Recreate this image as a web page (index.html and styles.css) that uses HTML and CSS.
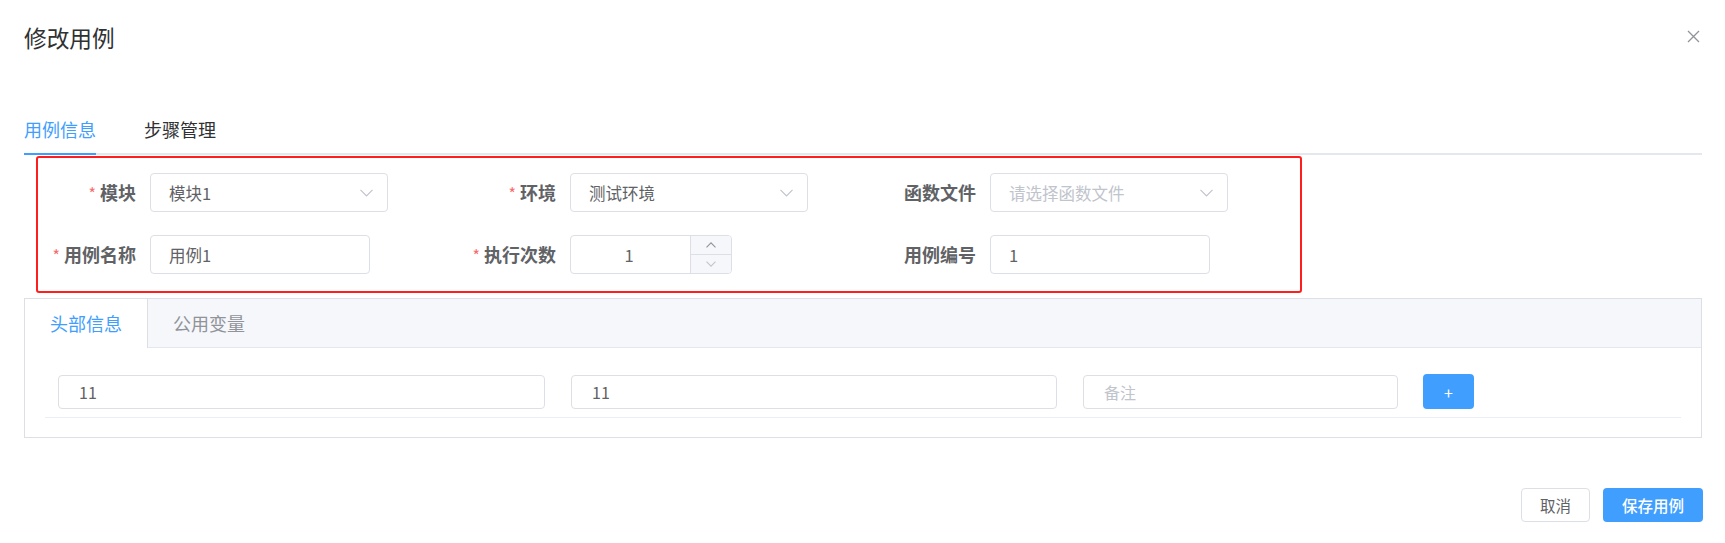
FILE: index.html
```html
<!DOCTYPE html>
<html lang="zh-CN">
<head>
<meta charset="utf-8">
<title>修改用例</title>
<link rel="stylesheet" href="styles.css">
</head>
<body>
<div class="dialog">
  <div class="dlg-header">
    <span class="dlg-title">修改用例</span>
    <svg class="dlg-close" width="13" height="13" viewBox="0 0 13 13"><path d="M1 1L12 12M12 1L1 12" stroke="#909399" stroke-width="1.3" fill="none"/></svg>
  </div>
  <div class="dlg-body">
    <div class="tabs-nav">
      <div class="tab active">用例信息</div>
      <div class="tab">步骤管理</div>
    </div>

    <div class="case-form">
      <div class="form-item">
        <label class="form-label"><span class="req">*</span>模块</label>
        <div class="input w-select"><span>模块1</span><svg class="chev" width="13" height="8" viewBox="0 0 13 8"><path d="M0.5 0.8L6.5 6.8L12.5 0.8" stroke="#c0c4cc" stroke-width="1.2" fill="none"/></svg></div>
      </div>
      <div class="form-item">
        <label class="form-label"><span class="req">*</span>环境</label>
        <div class="input w-select"><span>测试环境</span><svg class="chev" width="13" height="8" viewBox="0 0 13 8"><path d="M0.5 0.8L6.5 6.8L12.5 0.8" stroke="#c0c4cc" stroke-width="1.2" fill="none"/></svg></div>
      </div>
      <div class="form-item">
        <label class="form-label">函数文件</label>
        <div class="input w-select"><span class="placeholder">请选择函数文件</span><svg class="chev" width="13" height="8" viewBox="0 0 13 8"><path d="M0.5 0.8L6.5 6.8L12.5 0.8" stroke="#c0c4cc" stroke-width="1.2" fill="none"/></svg></div>
      </div>

      <div class="form-item">
        <label class="form-label"><span class="req">*</span>用例名称</label>
        <div class="input w-text">用例1</div>
      </div>
      <div class="form-item">
        <label class="form-label"><span class="req">*</span>执行次数</label>
        <div class="num">
          <div class="num-val">1</div>
          <div class="num-ctrl">
            <span><svg width="10" height="6" viewBox="0 0 10 6"><path d="M0.5 5.3L5 0.8L9.5 5.3" stroke="#909399" stroke-width="1.1" fill="none"/></svg></span>
            <span><svg width="10" height="6" viewBox="0 0 10 6"><path d="M0.5 0.7L5 5.2L9.5 0.7" stroke="#c0c4cc" stroke-width="1.1" fill="none"/></svg></span>
          </div>
        </div>
      </div>
      <div class="form-item">
        <label class="form-label">用例编号</label>
        <div class="input w-text">1</div>
      </div>
    </div>

    <div class="card">
      <div class="card-head">
        <div class="card-tab active">头部信息</div>
        <div class="card-tab">公用变量</div>
      </div>
      <div class="card-body">
        <div class="kv-row">
          <div class="kv-input k1">11</div>
          <div class="kv-input k2">11</div>
          <div class="kv-input k3"><span class="placeholder">备注</span></div>
          <div class="add-btn">+</div>
        </div>
      </div>
    </div>
  </div>
  <div class="dlg-footer">
    <div class="btn btn-default">取消</div>
    <div class="btn btn-primary">保存用例</div>
  </div>
</div>
</body>
</html>
```
FILE: styles.css
```css
* { box-sizing: border-box; }

body {
  margin: 0;
  background: #fff;
  font-family: "Noto Sans CJK SC", "Noto Sans", sans-serif;
  color: #606266;
}

.dialog {
  width: 1725px;
  height: 543px;
}

.dlg-header {
  display: flex;
  justify-content: space-between;
  align-items: flex-start;
  height: 50px;
  padding: 26px 25px 0 24px;
}

.dlg-title {
  font-size: 22.7px;
  line-height: 24px;
  color: #303133;
}

.dlg-close {
  display: block;
  margin-top: 4px;
}

.dlg-body {
  padding: 0 23px 0 24px;
}

.tabs-nav {
  display: flex;
  gap: 48px;
  margin-top: 61px;
  border-bottom: 2px solid #e4e7ed;
}

.tab {
  font-size: 18px;
  line-height: 36px;
  padding-bottom: 6px;
  color: #303133;
  margin-bottom: -2px;
  border-bottom: 2px solid transparent;
}

.tab.active {
  color: #409eff;
  border-bottom-color: #409eff;
}

.case-form {
  margin: 1px 0 0 12px;
  width: 1266px;
  border: 2px solid #ff1e1e;
  border-radius: 3px;
  padding: 15px 0 17px 2px;
  display: grid;
  grid-template-columns: repeat(3, 420px);
  row-gap: 23px;
}

.form-item {
  display: flex;
  align-items: center;
  height: 39px;
}

.form-label {
  width: 110px;
  flex: none;
  text-align: right;
  padding-right: 14px;
  font-size: 18px;
  font-weight: 700;
  line-height: 39px;
  color: #606266;
  white-space: nowrap;
}

.req {
  color: #f56c6c;
  font-weight: 400;
  font-size: 16px;
  margin-right: 4px;
}

.input {
  height: 39px;
  border: 1px solid #dcdfe6;
  border-radius: 4px;
  display: flex;
  align-items: center;
  padding: 0 0 0 18px;
  font-size: 16.5px;
  color: #606266;
  background: #fff;
  white-space: nowrap;
}

.w-select {
  width: 238px;
  padding-right: 14px;
  justify-content: space-between;
}

.w-text {
  width: 220px;
}

.placeholder {
  color: #c0c4cc;
}

.chev {
  display: block;
}

.num {
  width: 162px;
  height: 39px;
  border: 1px solid #dcdfe6;
  border-radius: 4px;
  display: flex;
  overflow: hidden;
}

.num-val {
  flex: 1;
  display: flex;
  align-items: center;
  justify-content: center;
  padding-right: 3px;
  font-size: 16.5px;
  color: #606266;
}

.num-ctrl {
  width: 41px;
  border-left: 1px solid #dcdfe6;
  background: #f5f7fa;
  display: flex;
  flex-direction: column;
}

.num-ctrl span {
  flex: 1;
  display: flex;
  align-items: center;
  justify-content: center;
}

.num-ctrl span + span {
  border-top: 1px solid #dcdfe6;
}

.card {
  margin-top: 5px;
  border: 1px solid #dcdfe6;
}

.card-head {
  display: flex;
  align-items: flex-start;
  height: 49px;
  background: #f5f7fa;
  border-bottom: 1px solid #e4e7ed;
}

.card-tab {
  height: 49px;
  padding: 0 25px;
  font-size: 18px;
  line-height: 48px;
  color: #909399;
}

.card-tab.active {
  background: #fff;
  color: #409eff;
  border-right: 1px solid #dcdfe6;
}

.card-body {
  padding: 26px 20px 19px;
}

.kv-row {
  display: flex;
  align-items: center;
  gap: 26px;
  padding: 0 13px 8px;
  border-bottom: 1px solid #ebeef5;
}

.kv-input {
  height: 34px;
  border: 1px solid #dcdfe6;
  border-radius: 4px;
  padding-left: 20px;
  font-size: 16px;
  color: #606266;
  display: flex;
  align-items: center;
}

.k1 { width: 487px; }
.k2 { width: 486px; }
.k3 { width: 315px; }

.add-btn {
  width: 51px;
  height: 35px;
  margin-left: -1px;
  background: #409eff;
  border-radius: 4px;
  color: #fff;
  font-size: 16px;
  display: flex;
  align-items: center;
  justify-content: center;
}

.dlg-footer {
  display: flex;
  justify-content: flex-end;
  gap: 13px;
  padding-right: 22px;
  margin-top: 50px;
}

.btn {
  height: 34px;
  border-radius: 4px;
  font-size: 15.5px;
  display: flex;
  align-items: center;
  justify-content: center;
}

.btn-default {
  width: 69px;
  border: 1px solid #dcdfe6;
  color: #606266;
  background: #fff;
}

.btn-primary {
  width: 100px;
  background: #409eff;
  color: #fff;
  font-weight: 500;
}
```
